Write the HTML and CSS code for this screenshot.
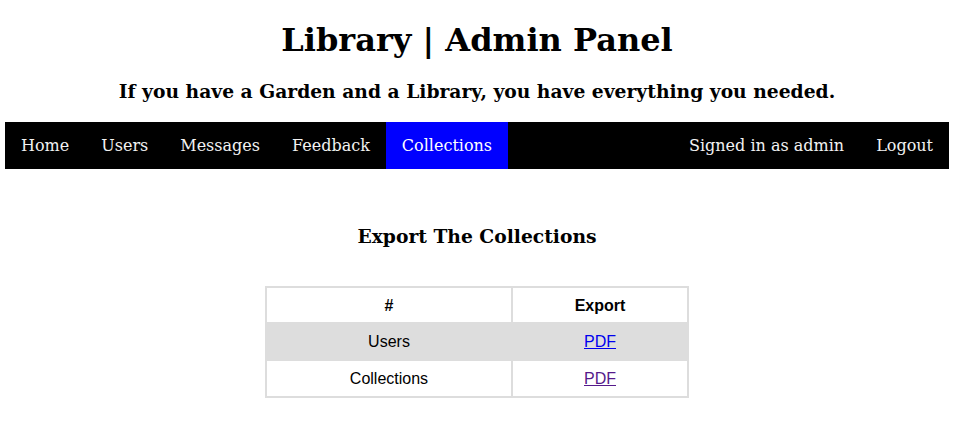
FILE: index.html
```html
<!DOCTYPE html>
<html lang="en">
<head>
<meta charset="utf-8">
<title>Library | Admin Panel</title>
<link rel="stylesheet" href="styles.css">
</head>
<body>
<header class="masthead">
  <h1 class="title">Library | Admin Panel</h1>
  <h3 class="tagline">If you have a Garden and a Library, you have everything you needed.</h3>
</header>
<nav class="topnav">
  <div class="nav-left">
    <a href="#" class="nav-link">Home</a>
    <a href="#" class="nav-link">Users</a>
    <a href="#" class="nav-link">Messages</a>
    <a href="#" class="nav-link">Feedback</a>
    <a href="#" class="nav-link active">Collections</a>
  </div>
  <div class="nav-right">
    <span class="nav-link">Signed in as admin</span>
    <a href="#" class="nav-link">Logout</a>
  </div>
</nav>
<main class="content">
  <h3 class="section-title">Export The Collections</h3>
  <table class="export-table">
    <thead>
      <tr><th class="col-name">#</th><th class="col-export">Export</th></tr>
    </thead>
    <tbody>
      <tr class="row-alt"><td>Users</td><td><a href="#" class="pdf-link">PDF</a></td></tr>
      <tr><td>Collections</td><td><a href="#" class="pdf-link visited">PDF</a></td></tr>
    </tbody>
  </table>
</main>
</body>
</html>
```

FILE: styles.css
```css
html, body {
  margin: 0;
  padding: 0;
  background: #fff;
}
body {
  padding: 0 7px 0 5px;
  font-family: "DejaVu Serif", serif;
  color: #000;
}
.masthead {
  text-align: center;
  padding-top: 21px;
}
.title {
  margin: 0;
  font-weight: bold;
  font-size: 32px;
  line-height: 38px;
}
.tagline {
  margin: 21px 0 0;
  font-weight: bold;
  font-size: 18.72px;
  line-height: 22px;
}
.topnav {
  margin-top: 20px;
  background: #000;
  display: flex;
  justify-content: space-between;
}
.nav-left, .nav-right {
  display: flex;
}
.nav-link {
  display: block;
  padding: 15px 16px 13px;
  font-size: 16px;
  line-height: 18.6px;
  color: #f2f2f2;
  text-decoration: none;
}
.nav-link.active {
  background: #0000ff;
  color: #fff;
}
.content {
  text-align: center;
  padding-top: 56px;
}
.section-title {
  margin: 0;
  font-size: 18.72px;
  font-weight: bold;
  line-height: 22px;
}
.export-table {
  margin: 39px auto 0;
  border-collapse: collapse;
  width: 424px;
  font-family: "Liberation Sans", Arial, sans-serif;
  font-size: 16px;
}
.export-table th, .export-table td {
  border: 2px solid #ddd;
  padding: 9px 8px 7px;
  line-height: 18.7px;
  text-align: center;
}
.col-name { width: 228px; }
.row-alt { background: #ddd; }
.pdf-link { color: #0000ee; }
.pdf-link.visited { color: #551a8b; }
```
